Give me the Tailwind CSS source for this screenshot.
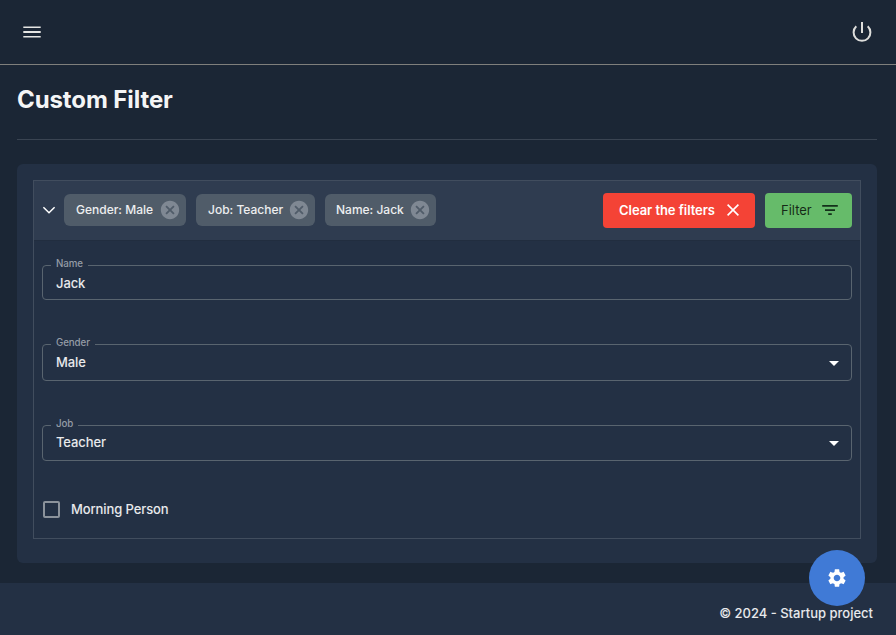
<!DOCTYPE html>
<html lang="en">
<head>
<meta charset="utf-8">
<title>Custom Filter</title>
<script src="https://cdn.jsdelivr.net/npm/@tailwindcss/browser@4"></script>
</head>
<body class="bg-[#1b2635] text-white/90 font-['Inter',sans-serif] text-[13px] font-medium w-[896px] h-[635px] overflow-hidden flex flex-col relative">
  <header class="h-[65px] shrink-0 border-b border-[#7f7f7c] flex items-center justify-between pl-5 pr-[22px]">
    <button aria-label="Menu"><svg class="size-6 fill-[#e6e6e4]" viewBox="0 0 24 24"><path d="M3.3 6.5h17.4V8H3.3zM3.3 11h17.4v2H3.3zM3.3 16h17.4v1.5H3.3z"/></svg></button>
    <button aria-label="Log out"><svg class="size-6 fill-none stroke-[#dededc]" stroke-width="2" viewBox="0 0 24 24"><path d="M12 2v11"/><path d="M17.7 6.3a8.4 8.4 0 1 1-11.4 0"/></svg></button>
  </header>
  <main class="pl-[17px] pr-[19px]">
    <h1 class="h-[74px] pt-[21px] text-2xl leading-[28px] font-bold tracking-[-0.1px] text-[#f4f5f6]">Custom Filter</h1>
    <hr class="border-[#3a4452]">
    <section class="mt-6 h-[399px] rounded-md bg-[#233044] px-4 pt-4">
      <div class="h-[359px] border border-[#414d5e]">
        <div class="h-[60px] bg-[#2f3c50] border-b border-[#212d3f] flex items-center pl-[5px] pr-2 whitespace-nowrap">
          <svg class="mb-[2px] size-5 fill-none stroke-white" stroke-width="1.5" viewBox="0 0 20 20"><path d="M4.4 7.3 10 12.8l5.6-5.5"/></svg>
          <div class="ml-[5px] mb-[2px] flex gap-[10px] text-xs">
            <div class="w-[122px] h-8 rounded-md bg-[#505c69] flex items-center justify-between pl-3 pr-[5px]"><span>Gender: Male</span><svg class="size-[22px] shrink-0 fill-[#7f8893]" viewBox="0 0 24 24"><path d="M12 2C6.47 2 2 6.47 2 12s4.47 10 10 10 10-4.47 10-10S17.53 2 12 2zm5 13.59L15.59 17 12 13.41 8.41 17 7 15.59 10.59 12 7 8.41 8.41 7 12 10.59 15.59 7 17 8.41 13.41 12 17 15.59z"/></svg></div>
            <div class="w-[119px] h-8 rounded-md bg-[#505c69] flex items-center justify-between pl-3 pr-[5px]"><span>Job: Teacher</span><svg class="size-[22px] shrink-0 fill-[#7f8893]" viewBox="0 0 24 24"><path d="M12 2C6.47 2 2 6.47 2 12s4.47 10 10 10 10-4.47 10-10S17.53 2 12 2zm5 13.59L15.59 17 12 13.41 8.41 17 7 15.59 10.59 12 7 8.41 8.41 7 12 10.59 15.59 7 17 8.41 13.41 12 17 15.59z"/></svg></div>
            <div class="w-[111px] h-8 rounded-md bg-[#505c69] flex items-center justify-between pl-[11px] pr-[5px]"><span>Name: Jack</span><svg class="size-[22px] shrink-0 fill-[#7f8893]" viewBox="0 0 24 24"><path d="M12 2C6.47 2 2 6.47 2 12s4.47 10 10 10 10-4.47 10-10S17.53 2 12 2zm5 13.59L15.59 17 12 13.41 8.41 17 7 15.59 10.59 12 7 8.41 8.41 7 12 10.59 15.59 7 17 8.41 13.41 12 17 15.59z"/></svg></div>
          </div>
          <div class="ml-auto flex gap-[10px]">
            <button class="w-[152px] h-[35px] rounded bg-[#f44336] text-white font-semibold tracking-[-0.05px] flex items-center justify-between pl-4 pr-3"><span>Clear the filters</span><svg class="mb-px size-5 fill-none stroke-white" stroke-width="1.6" viewBox="0 0 20 20"><path d="m4.6 4.6 10.8 10.8m0-10.8L4.6 15.4"/></svg></button>
            <button class="w-[87px] h-[35px] rounded bg-[#66bb6a] text-black/80 font-normal flex items-center justify-between pl-4 pr-3"><span>Filter</span><svg class="mb-px size-5 fill-[#14301a]" viewBox="0 0 20 20"><path d="M2.2 5h15.6v1.7H2.2zM5 9.2h10v1.7H5zM8.2 13.3h3.6V15H8.2z"/></svg></button>
          </div>
        </div>
        <div class="flex flex-col pl-2 pr-2 pt-6 tracking-[-0.1px]">
          <fieldset class="h-[35px] rounded border border-[#59646f] pl-2">
            <legend class="h-px leading-[1px] px-[5px] text-[9.75px] text-[#959ca6]"><span class="relative -top-[2px]">Name</span></legend>
            <div class="pl-[5px] h-[33px] pt-[2px] flex items-center">Jack</div>
          </fieldset>
          <fieldset class="mt-11 h-[37px] rounded border border-[#59646f] pl-2">
            <legend class="h-px leading-[1px] px-[5px] text-[9.75px] text-[#959ca6]"><span class="relative -top-[2px]">Gender</span></legend>
            <div class="pl-[5px] pr-[5px] h-[35px] flex items-center justify-between">Male<svg class="size-6 fill-white" viewBox="0 0 24 24"><path d="m7 10 5 5 5-5z"/></svg></div>
          </fieldset>
          <fieldset class="mt-11 h-[36px] rounded border border-[#59646f] pl-2">
            <legend class="h-px leading-[1px] px-[5px] text-[9.75px] text-[#959ca6]"><span class="relative -top-[2px]">Job</span></legend>
            <div class="pl-[5px] pr-[5px] h-[34px] flex items-center justify-between">Teacher<svg class="size-6 fill-white" viewBox="0 0 24 24"><path d="m7 10 5 5 5-5z"/></svg></div>
          </fieldset>
          <label class="mt-[38px] h-5 flex items-center"><span class="ml-px size-[17px] rounded-[2px] border-2 border-[#8b929b] mr-[11px]"></span><span class="pt-px">Morning Person</span></label>
        </div>
      </div>
    </section>
  </main>
  <footer class="mt-auto h-[52px] shrink-0 bg-[#233044] flex items-end justify-end pr-[23px] pb-3 text-[13px] leading-5">© 2024 - Startup project</footer>
  <button aria-label="Settings" class="absolute left-[809px] top-[550px] size-14 rounded-full bg-[#407ad6] flex items-center justify-center"><svg class="size-[22px] fill-white" viewBox="0 0 24 24"><path d="M19.14 12.94c.04-.3.06-.61.06-.94 0-.32-.02-.64-.07-.94l2.03-1.58c.18-.14.23-.41.12-.61l-1.92-3.32c-.12-.22-.37-.29-.59-.22l-2.39.96c-.5-.38-1.03-.7-1.62-.94l-.36-2.54c-.04-.24-.24-.41-.48-.41h-3.84c-.24 0-.43.17-.47.41l-.36 2.54c-.59.24-1.13.57-1.62.94l-2.39-.96c-.22-.08-.47 0-.59.22L2.74 8.87c-.12.21-.08.47.12.61l2.03 1.58c-.05.3-.09.63-.09.94s.02.64.07.94l-2.03 1.58c-.18.14-.23.41-.12.61l1.92 3.32c.12.22.37.29.59.22l2.39-.96c.5.38 1.03.7 1.62.94l.36 2.54c.05.24.24.41.48.41h3.84c.24 0 .44-.17.47-.41l.36-2.54c.59-.24 1.13-.56 1.62-.94l2.39.96c.22.08.47 0 .59-.22l1.92-3.32c.12-.22.07-.47-.12-.61l-2.01-1.58zM12 15.6c-1.98 0-3.6-1.62-3.6-3.6s1.62-3.6 3.6-3.6 3.6 1.62 3.6 3.6-1.62 3.6-3.6 3.6z"/></svg></button>
</body>
</html>
